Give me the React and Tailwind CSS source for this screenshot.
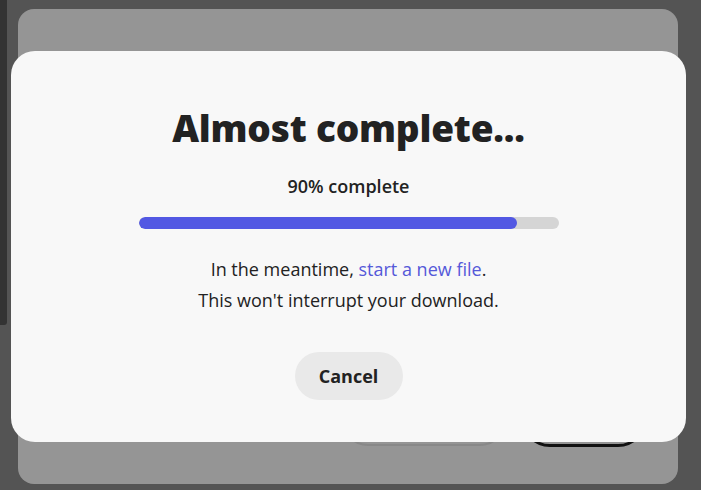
import React from 'react';

const App = () => {
  const progress = 90;

  return (
    <div
      className="relative w-[701px] h-[490px] overflow-hidden bg-[#545454]"
      style={{ fontFamily: '"Open Sans", "Noto Sans", sans-serif' }}
    >
      {/* Left sidebar edge */}
      <div className="absolute left-0 top-0 w-[7px] h-[325px] bg-[#333333] rounded-br-[3px]" />

      {/* Dialog behind */}
      <div className="absolute left-[18px] top-[9px] w-[660px] h-[475px] rounded-[16px] bg-[#959595]">
        <div className="absolute left-[322px] top-[380px] w-[168px] h-[57px] rounded-full border-2 border-[#888888]" />
        <div className="absolute left-[503px] top-[380px] w-[126px] h-[58px] rounded-full border-[3px] border-[#111111]" />
      </div>

      {/* Progress modal */}
      <div className="absolute left-[11px] top-[51px] w-[675px] h-[391px] rounded-[24px] bg-[#f8f8f8] flex flex-col items-center">
        <h1 className="mt-[55px] text-[37px] leading-[44px] font-extrabold text-[#222222] tracking-[-0.2px]">
          Almost complete...
        </h1>
        <p className="mt-[23px] text-[18px] leading-[26px] font-semibold text-[#222222]">
          {progress}% complete
        </p>
        <div className="mt-[18px] w-[420px] h-[12px] rounded-full bg-[#d5d5d5] overflow-hidden">
          <div className="h-full rounded-full bg-[#5258e3]" style={{ width: `${progress}%` }} />
        </div>
        <div className="mt-[25px] text-[18px] leading-[31px] text-[#222222] text-center">
          <p>
            In the meantime, <a href="#" className="text-[#5559d9]">start a new file</a>.
          </p>
          <p>This won't interrupt your download.</p>
        </div>
        <button
          type="button"
          className="mt-[36px] w-[108px] h-[48px] rounded-full bg-[#e9e9e9] text-[18px] font-bold text-[#222222]"
        >
          Cancel
        </button>
      </div>
    </div>
  );
};

export default App;
